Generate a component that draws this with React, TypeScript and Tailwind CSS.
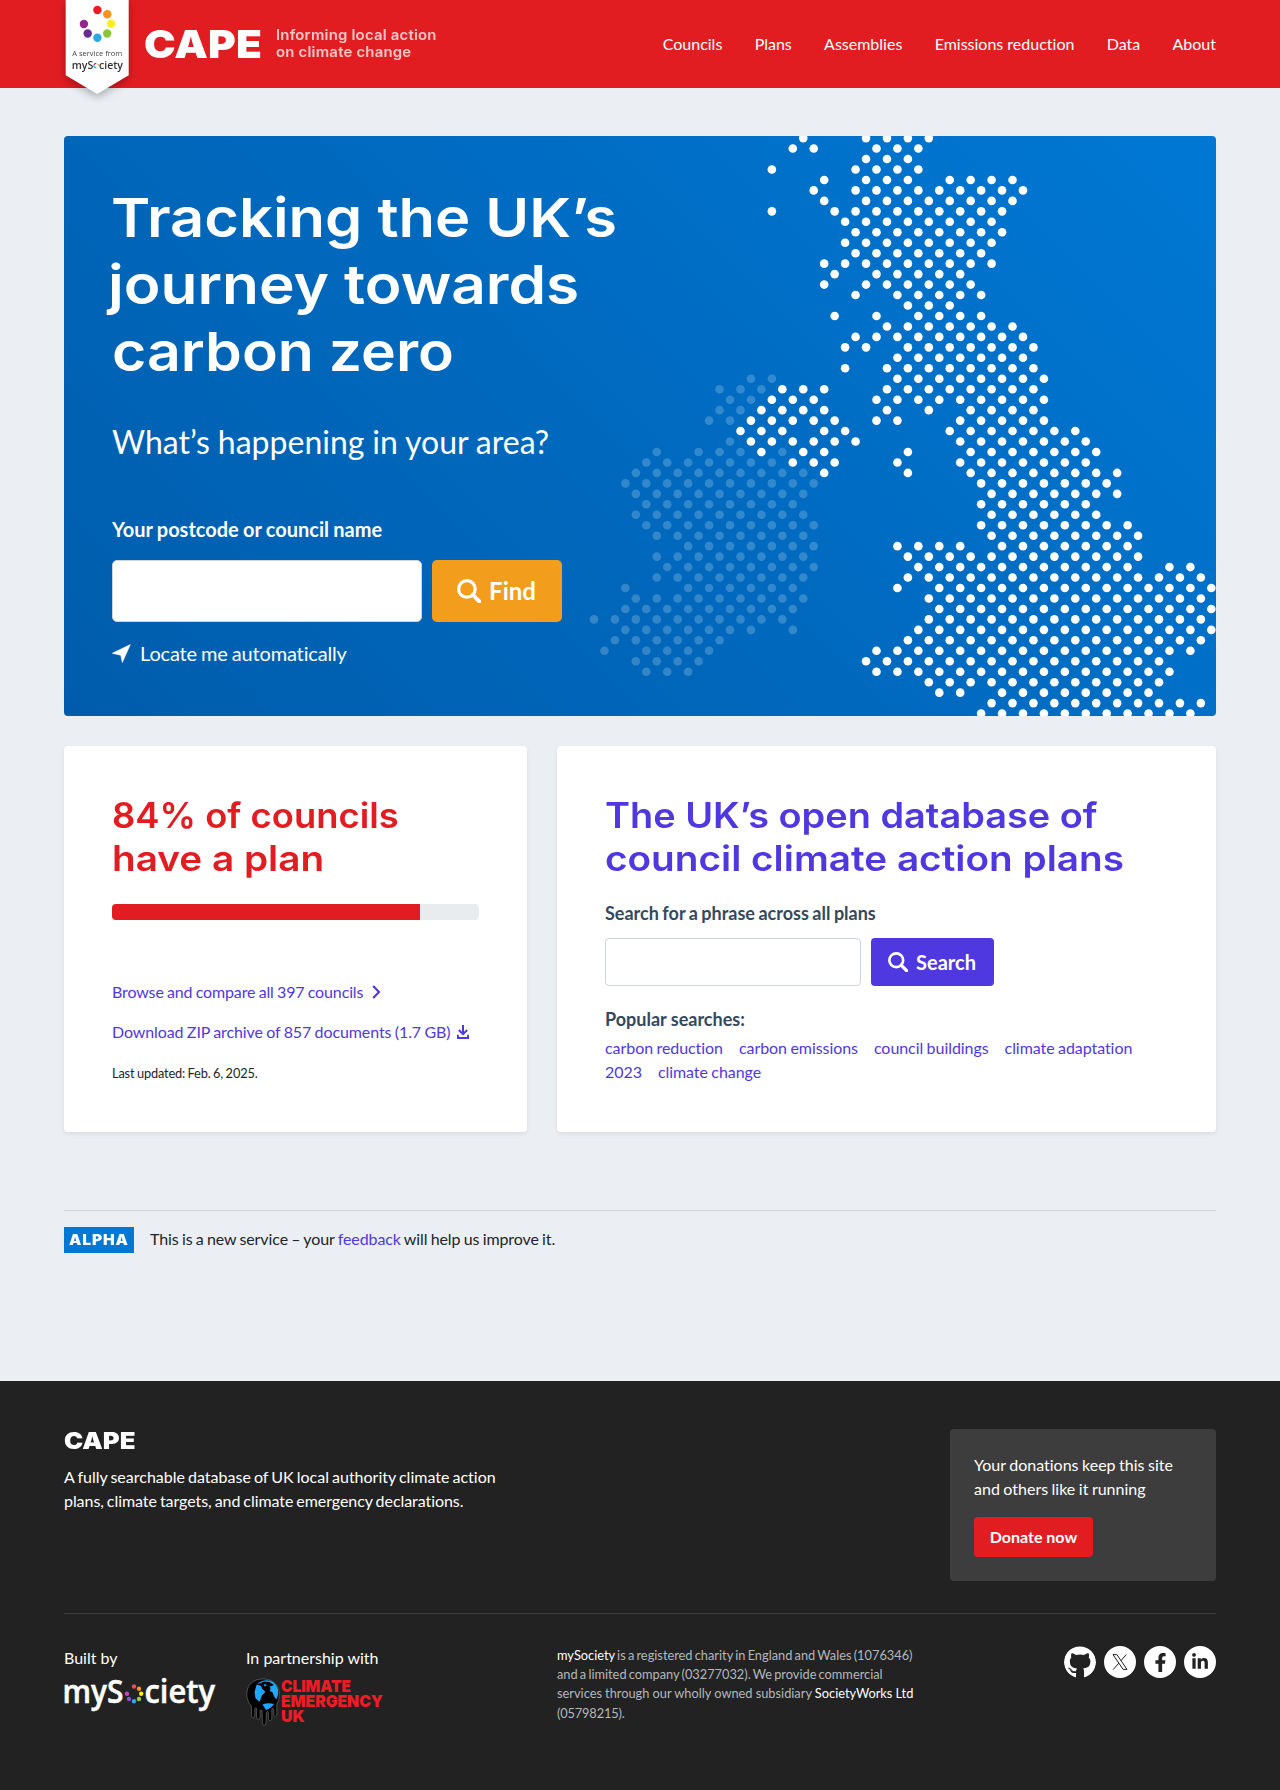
import type { ReactNode } from "react";
import { FaFacebookF, FaGithub, FaLinkedinIn } from "react-icons/fa";

type Run = [number, number];

const one = (n: number): Run => [n, n];

/* Rows of the dotted map, each a list of [first, last] columns in steps of two. */
const UK_ROWS: Run[][] = [
  [one(20), [26, 32]],
  [[19, 21], [27, 31]],
  [[26, 30]],
  [one(17), [25, 31]],
  [one(22), [26, 30], [34, 40]],
  [one(21), [25, 41]],
  [one(22), [26, 40]],
  [one(17), [23, 39]],
  [[24, 38]],
  [[25, 39]],
  [[24, 38]],
  [[25, 37]],
  [[22, 38]],
  [one(23), [27, 35]],
  [one(22), [26, 36]],
  [one(25), [29, 37]],
  [[30, 34]],
  [one(23), one(27), [31, 37]],
  [[28, 40]],
  [[25, 41]],
  [[24, 26], [30, 42]],
  [[29, 41]],
  [one(24), [28, 42]],
  [[29, 43]],
  [[18, 22], [28, 42]],
  [[17, 21], [27, 43]],
  [[16, 22], one(28), one(32), [36, 42]],
  [[15, 23], [27, 29], [35, 43]],
  [[14, 18], [22, 24], [34, 46]],
  [[15, 25], [35, 47]],
  [one(16), [20, 22], one(30), [36, 48]],
  [[19, 23], one(29), [35, 47]],
  [one(22), one(30), [36, 50]],
  [[37, 49]],
  [[38, 50]],
  [[37, 47]],
  [[38, 48]],
  [[37, 51]],
  [[38, 52]],
  [[29, 35], [39, 51]],
  [[30, 52]],
  [[31, 51], [55, 57]],
  [[30, 58]],
  [one(29), [33, 59]],
  [[32, 58]],
  [[33, 59]],
  [[32, 58]],
  [[31, 59]],
  [[30, 58]],
  [[27, 57]],
  [[26, 54]],
  [[27, 55]],
  [[32, 54]],
  [[33, 35], [39, 53]],
  [[38, 58]],
  [[37, 57]],
];

const IRELAND_FIRST_ROW = 23;
const IRELAND_ROWS: Run[][] = [
  [[15, 17]],
  [[12, 16]],
  [[13, 15]],
  [[12, 14]],
  [[11, 13]],
  [],
  [one(13)],
  [one(6), [10, 14], one(18)],
  [[5, 17]],
  [[4, 20]],
  [[3, 21]],
  [[4, 20]],
  [[5, 19]],
  [[4, 20]],
  [[5, 21]],
  [[6, 20]],
  [[9, 21]],
  [[6, 20]],
  [[7, 21]],
  [[6, 20]],
  [one(3), [9, 19]],
  [[4, 20]],
  [[3, 19]],
  [[0, 18]],
  [[3, 15], one(19)],
  [[2, 12]],
  [one(1), [5, 11]],
  [[4, 10]],
  [[5, 9]],
];

const STEP = 10.463;

function Dots({ rows, firstRow = 0 }: { rows: Run[][]; firstRow?: number }) {
  return (
    <>
      {rows.flatMap((runs, r) =>
        runs.flatMap(([a, b]) =>
          Array.from({ length: (b - a) / 2 + 1 }, (_, i) => (
            <circle
              key={`${r}-${a + i * 2}`}
              cx={10 + (a + i * 2) * STEP}
              cy={2.1 + (r + firstRow) * STEP}
              r={4.3}
            />
          )),
        ),
      )}
    </>
  );
}

function DottedMap() {
  return (
    <svg className="absolute top-0 right-0" width="632" height="580" viewBox="0 0 632 580" fill="#fff">
      <g opacity="0.2">
        <Dots rows={IRELAND_ROWS} firstRow={IRELAND_FIRST_ROW} />
      </g>
      <Dots rows={UK_ROWS} />
    </svg>
  );
}

function SearchIcon({ size }: { size: number }) {
  return (
    <svg width={size} height={size} viewBox="0 0 24 24" fill="none" stroke="currentColor">
      <circle cx="9.9" cy="9.9" r="8.3" strokeWidth="3.2" />
      <path d="M15.8 15.8 22.3 22.3" strokeWidth="4" strokeLinecap="round" />
    </svg>
  );
}

function ServiceBadge() {
  return (
    <svg
      className="absolute top-0 left-0 drop-shadow-[0_3px_4px_rgba(0,0,0,0.3)]"
      width="66"
      height="96"
      viewBox="64 0 66 96"
    >
      <path d="M65.7 0h63v75.2L97.2 94 65.7 75.2Z" fill="#fff" />
      <circle cx="97.4" cy="10" r="4.2" fill="#ed1c24" />
      <circle cx="107.3" cy="14.2" r="4.2" fill="#f7931e" />
      <circle cx="111.2" cy="23.8" r="4.2" fill="#fcee21" />
      <circle cx="107.2" cy="33.5" r="4.2" fill="#8cc63f" />
      <circle cx="97.4" cy="37.7" r="4.2" fill="#29abe2" />
      <circle cx="87.7" cy="33.5" r="4.2" fill="#662d91" />
      <circle cx="83.9" cy="24" r="4.2" fill="#93278f" />
      <text x="72.3" y="55.6" fontSize="7.6" fontFamily="'Open Sans'" fill="#444" textLength="50" lengthAdjust="spacingAndGlyphs">
        A service from
      </text>
      <g fontSize="11.5" fontWeight="600" fontFamily="'Open Sans'" fill="#333">
        <text x="71.8" y="68.8" textLength="21.5" lengthAdjust="spacingAndGlyphs">myS</text>
        <text x="99" y="68.8" textLength="24" lengthAdjust="spacingAndGlyphs">ciety</text>
      </g>
      <circle cx="96.2" cy="65.6" r="2.3" fill="none" strokeWidth="1.2" stroke="#29abe2" strokeDasharray="3.6 10.9" strokeDashoffset="-3" />
      <circle cx="96.2" cy="65.6" r="2.3" fill="none" strokeWidth="1.2" stroke="#f7931e" strokeDasharray="3.6 10.9" strokeDashoffset="-11" />
      <circle cx="96.2" cy="65.6" r="2.3" fill="none" strokeWidth="1.2" stroke="#93278f" strokeDasharray="3 11.5" strokeDashoffset="-6.8" />
    </svg>
  );
}

function MySocietyLogo() {
  return (
    <svg width="160" height="50" viewBox="60 1664.500 160 50" className="-mt-3 -ml-1 block" fill="#fff">
      <g fontSize="32" fontWeight="600" fontFamily="'Open Sans'" stroke="#fff" strokeWidth="0.5">
        <text x="62.5" y="1702" textLength="61" lengthAdjust="spacingAndGlyphs">myS</text>
        <text x="144.5" y="1702" textLength="70.5" lengthAdjust="spacingAndGlyphs">ciety</text>
      </g>
      <circle cx="134" cy="1686" r="2.2" fill="#ee4b5a" />
      <circle cx="139" cy="1688.3" r="2.2" fill="#f7931e" />
      <circle cx="141.2" cy="1693.3" r="2.2" fill="#fcee21" />
      <circle cx="139" cy="1698.5" r="2.2" fill="#8fd14f" />
      <circle cx="134" cy="1700.7" r="2.2" fill="#29abe2" />
      <circle cx="129" cy="1698.5" r="2.2" fill="#8e4fd6" />
      <circle cx="127" cy="1693.3" r="2.2" fill="#c545c9" />
    </svg>
  );
}

function ClimateEmergencyLogo() {
  return (
    <svg width="142" height="54" viewBox="246 1673 142 54" className="-mt-1 block">
      <path
        d="M263 1679c10 0 16.300 6 16.300 15.500 0 4-1 7-2.500 9.500v10.500c0 2.500-3 2.500-3 0v-5c-.5-1.500-1.700-1.500-2 0v9c0 3-3.400 3-3.400 0v-6c-.4-1.500-1.600-1.500-2 0l-.4 10.500c-.3 3-3.500 3-3.600 0l-.3-12c-.4-1.500-1.700-1.500-2 0v6c0 3-3.500 3-3.500 0v-8c-.3-1.500-1.500-1.500-1.800 0v6.500c0 3-3.300 3-3.300 0V1706c-3-3-4.700-7-4.700-11.500 0-9.500 6.200-15.500 16.200-15.500Z"
        fill="#000"
        stroke="#888"
        strokeWidth=".5"
      />
      <path
        d="M256.500 1685c3.500-4.500 10-6 15-3.700 4 2 6.700 6 6.700 10.500 0 3-.6 5.500-2 7.500l-2.200-3-1.500-4-2.500-1 .5-3.500-3-3.500-2.500 2.500-1.500-2.500-2.500 2 1.500 3 3 2.500-3.500 3.500-2.500 6.500-4-3.500-1-6Z"
        fill="#1ea7fd"
      />
      <path d="M256.500 1684.500c3-1 5-1.500 7-3l6 .5 4.500 3-4 1.500-5-2.500-3 2-2-.5Z" fill="#000" />
      <path d="M262.500 1704.500c3.500-1.500 7.500-1.500 11.500-.5-1.500 2.500-4.500 5-8 6Z" fill="#1ea7fd" />
      <g fill="#ee1c25" fontFamily="Inter" fontWeight="900" fontSize="16.500">
        <text x="281" y="1691.600" textLength="70" lengthAdjust="spacingAndGlyphs">CLIMATE</text>
        <text x="281" y="1707.200" textLength="102" lengthAdjust="spacingAndGlyphs">EMERGENCY</text>
        <text x="281" y="1722.400" textLength="23.500" lengthAdjust="spacingAndGlyphs">UK</text>
      </g>
    </svg>
  );
}

function Header() {
  const nav = ["Councils", "Plans", "Assemblies", "Emissions reduction", "Data", "About"];
  return (
    <header className="h-[88px] bg-[#e21d22] text-white">
      <div className="relative mx-auto flex h-full w-[1152px] items-center">
        <ServiceBadge />
        <span className="ml-20 w-[132px] origin-left scale-x-[1.085] font-['Inter'] text-[39px] leading-[48px] font-black tracking-[0.1px]">
          CAPE
        </span>
        <span className="-mt-[2px] origin-left scale-x-[1.065] font-['Inter'] text-[14px] leading-[17px] font-semibold tracking-[0.2px] whitespace-nowrap text-white/75">
          Informing local action
          <br />
          on climate change
        </span>
        <nav className="ml-auto flex gap-[32.300px] text-base">
          {nav.map((item) => (
            <a key={item} href="#">{item}</a>
          ))}
        </nav>
      </div>
    </header>
  );
}

function Hero() {
  return (
    <section className="relative mt-12 h-[580px] overflow-hidden rounded bg-[linear-gradient(45deg,#005cab,#0078d4)] p-12 text-white">
      <DottedMap />
      <div className="relative">
        <h1 className="font-['Inter'] text-[54px] leading-[67.2px] font-semibold whitespace-nowrap">
          <span className="-ml-px block w-fit origin-left scale-x-[1.104]">Tracking the UK’s</span>
          <span className="-ml-[4px] block w-fit origin-left scale-x-[1.117]">journey towards</span>
          <span className="block w-fit origin-left scale-x-[1.092]">carbon zero</span>
        </h1>
        <p className="mt-8 text-[32px] leading-[48px] [word-spacing:-0.3px]">What’s happening in your area?</p>
        <form className="mt-12">
          <label className="block text-xl leading-[30px] font-bold [word-spacing:-0.6px]">
            Your postcode or council name
          </label>
          <div className="mt-4 flex gap-2.5">
            <input className="h-[62px] w-[310px] rounded-[5px] border border-[#ced4da] bg-white" />
            <button type="button" className="flex h-[62px] w-[130px] items-center justify-center gap-2 rounded-[5px] bg-[#f39d1c] pr-px text-2xl font-bold">
              <SearchIcon size={24} />
              Find
            </button>
          </div>
          <a href="#" className="mt-4 flex items-center text-xl leading-[30px] tracking-[-0.16px] [word-spacing:-0.900px]">
            <svg width="19" height="19" viewBox="0 0 19 19" fill="currentColor" className="mt-0.5 mr-[9px]">
              <path d="M.3 9.300 18.300.6 10.300 18.600 8.800 11.200Z" strokeLinejoin="round" stroke="currentColor" strokeWidth=".6" />
            </svg>
            Locate me automatically
          </a>
        </form>
      </div>
    </section>
  );
}

function Card({ className, children }: { className: string; children: ReactNode }) {
  return (
    <section className={`h-[386px] rounded bg-white p-12 shadow-[0_2px_4px_rgba(0,0,0,0.075)] ${className}`}>
      {children}
    </section>
  );
}

function PlansCard() {
  return (
    <Card className="w-[463px]">
      <h2 className="font-['Inter'] text-[35px] leading-[43.2px] font-semibold whitespace-nowrap text-[#e21d22]">
        <span className="block w-fit origin-left scale-x-[1.039]">84% of councils</span>
        <span className="block w-fit origin-left scale-x-[1.106]">have a plan</span>
      </h2>
      <div className="mt-[23.600px] h-4 overflow-hidden rounded bg-[#e9ecef]">
        <div className="h-full w-[84%] bg-[#e21d22]" />
      </div>
      <a href="#" className="mt-[60px] flex items-center whitespace-nowrap text-[#4f38df] tracking-[-0.13px] [word-spacing:-0.700px]">
        Browse and compare all 397 councils
        <svg width="9" height="14" viewBox="0 0 9 14" fill="none" stroke="currentColor" strokeWidth="2.100" className="ml-[9px]">
          <path d="M1.200 1 7 7l-5.800 6" />
        </svg>
      </a>
      <a href="#" className="mt-4 flex items-center whitespace-nowrap text-[#4f38df] tracking-[-0.1px] [word-spacing:-0.600px]">
        Download ZIP archive of 857 documents (1.7 GB)
        <svg width="12" height="14" viewBox="0 0 12 14" fill="none" stroke="currentColor" strokeWidth="2" className="ml-[7px]">
          <path d="M6 0v9M1.800 5 6 9.200 10.200 5M.9 9.800v3.200h10.200V9.800" />
        </svg>
      </a>
      <p className="mt-[19.500px] text-[12.800px] leading-[19.200px] tracking-[-0.16px] text-[#212529] [word-spacing:-0.600px]">
        Last updated: Feb. 6, 2025.
      </p>
    </Card>
  );
}

function SearchCard() {
  const popular = ["carbon reduction", "carbon emissions", "council buildings", "climate adaptation", "2023", "climate change"];
  return (
    <Card className="w-[659px]">
      <h2 className="font-['Inter'] text-[35px] leading-[43.2px] font-semibold whitespace-nowrap text-[#4f38df]">
        <span className="block w-fit origin-left scale-x-[1.083]">The UK’s open database of</span>
        <span className="block w-fit origin-left scale-x-[1.106]">council climate action plans</span>
      </h2>
      <label className="mt-5 block text-[18px] leading-[27px] font-bold text-[#34495e] [word-spacing:-0.9px]">
        Search for a phrase across all plans
      </label>
      <div className="mt-[10.600px] flex gap-2.5">
        <input className="h-12 w-64 rounded border border-[#ced4da] bg-white" />
        <button type="button" className="flex h-12 w-[123px] items-center justify-center gap-2 rounded bg-[#4f38df] pr-px text-xl font-bold text-white">
          <SearchIcon size={20} />
          Search
        </button>
      </div>
      <h3 className="mt-[20px] text-[18px] leading-[27px] font-bold text-[#34495e]">
        Popular searches:
      </h3>
      <ul className="mt-[3px] flex flex-wrap gap-x-4 tracking-[-0.06px] text-[#4f38df] [word-spacing:-0.600px]">
        {popular.map((term) => (
          <li key={term}>
            <a href="#">{term}</a>
          </li>
        ))}
      </ul>
    </Card>
  );
}

function AlphaBanner() {
  return (
    <div className="mt-[78px] flex h-[171px] items-start border-t border-[#ced4da] pt-4">
      <span className="flex h-[26px] w-[70px] items-center justify-center bg-[#0078d4] pb-px font-['Inter'] text-[14px] font-black text-white">
        <span className="scale-x-[1.11] tracking-[0.800px]">ALPHA</span>
      </span>
      <p className="ml-4 leading-6 tracking-[-0.1px] text-[#212529] [word-spacing:-0.700px]">
        This is a new service – your <a href="#" className="text-[#4f38df]">feedback</a> will help us improve it.
      </p>
    </div>
  );
}

function Footer() {
  return (
    <footer className="h-[409px] bg-[#222] pt-12 text-white">
      <div className="mx-auto w-[1152px]">
        <div className="flex h-[185px] items-start justify-between border-b border-[#3d3d3d]">
          <div className="w-[440px]">
            <h2 className="w-fit origin-left scale-x-[1.118] font-['Inter'] text-[23px] leading-6 font-black">CAPE</h2>
            <p className="mt-3 leading-6 whitespace-nowrap [word-spacing:-1px]">
              A fully searchable database of UK local authority climate action
              <br />
              <span className="tracking-[-0.06px]">plans, climate targets, and climate emergency declarations.</span>
            </p>
          </div>
          <div className="h-[152px] w-[266px] rounded bg-[#3d3d3d] p-6">
            <p className="w-[210px] leading-6 [word-spacing:-0.6px]">
              Your donations keep this site and others like it running
            </p>
            <a href="#" className="mt-4 inline-flex h-10 w-[119px] items-center justify-center rounded bg-[#e21d22] font-bold">
              Donate now
            </a>
          </div>
        </div>
        <div className="flex items-start pt-8">
          <div className="w-[182px]">
            <p>Built by</p>
            <div className="mt-[7px]">
              <MySocietyLogo />
            </div>
          </div>
          <div className="w-[311px]">
            <p>In partnership with</p>
            <div className="mt-[7px]">
              <ClimateEmergencyLogo />
            </div>
          </div>
          <p className="w-[362px] text-[12.800px] leading-[19.200px] whitespace-nowrap text-[#b4b8bc]">
            <span className="[word-spacing:-1.050px]">
              <a href="#" className="text-white">mySociety</a> is a registered charity in England and Wales (1076346)
            </span>
            <br />
            <span className="[word-spacing:-1.1px]">and a limited company (03277032). We provide commercial</span>
            <br />
            <span className="[word-spacing:-0.1px]">
              services through our wholly owned subsidiary <a href="#" className="text-white">SocietyWorks Ltd</a>
            </span>
            <br />
            <span className="tracking-[-0.15px]">(05798215).</span>
          </p>
          <div className="ml-auto flex gap-2 text-[#222]">
            <a href="#" className="flex size-8 items-center justify-center overflow-hidden rounded-full text-white">
              <FaGithub size={33} />
            </a>
            <a href="#" className="flex size-8 items-center justify-center rounded-full bg-white">
              <svg width="16" height="16" viewBox="0 0 16 16" fill="none" stroke="currentColor" strokeWidth="1">
                <path d="M1 .6h3.900L15 15.400h-3.900ZM14.300.5 9 6.700M6.900 9.100 1.200 15.500" />
              </svg>
            </a>
            <a href="#" className="flex size-8 items-center justify-center rounded-full bg-white">
              <FaFacebookF size={19} />
            </a>
            <a href="#" className="flex size-8 items-center justify-center rounded-full bg-white">
              <FaLinkedinIn size={18} />
            </a>
          </div>
        </div>
      </div>
    </footer>
  );
}

export default function App() {
  return (
    <div className="min-h-[1790px] bg-[#ebeff4] font-['Lato',sans-serif] text-base [font-variant-ligatures:none]">
      <Header />
      <main className="mx-auto w-[1152px]">
        <Hero />
        <div className="mt-[30px] flex justify-between">
          <PlansCard />
          <SearchCard />
        </div>
        <AlphaBanner />
      </main>
      <Footer />
    </div>
  );
}
